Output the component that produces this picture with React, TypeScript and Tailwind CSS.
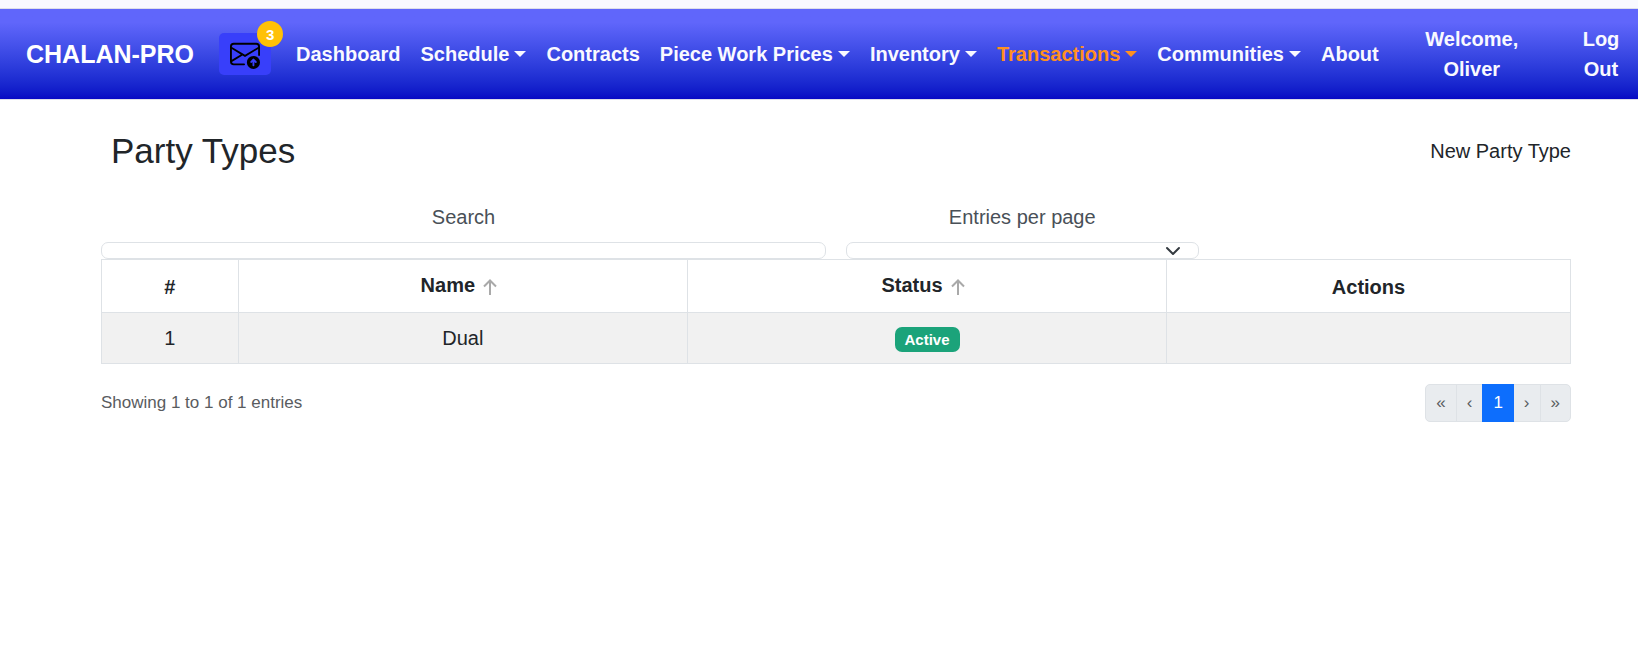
import React from "react";
import { BsEnvelopeArrowUp } from "react-icons/bs";

type NavItem = { label: string; menu?: boolean; active?: boolean };

const navItems: NavItem[] = [
  { label: "Dashboard" },
  { label: "Schedule", menu: true },
  { label: "Contracts" },
  { label: "Piece Work Prices", menu: true },
  { label: "Inventory", menu: true },
  { label: "Transactions", menu: true, active: true },
  { label: "Communities", menu: true },
  { label: "About" },
];

const rows = [{ id: 1, name: "Dual", status: "Active" }];

function NavLink({ label, menu, active }: NavItem) {
  return (
    <a
      href="#"
      className={`flex items-center whitespace-nowrap px-[10px] ${active ? "text-[#ff9020]" : "text-[#f9f9ff]"}`}
    >
      {label}
      {menu && (
        <span className="ml-[5px] border-x-6 border-t-6 border-x-transparent border-t-current" />
      )}
    </a>
  );
}

function SortArrow() {
  return (
    <svg viewBox="0 0 14 16" className="h-4 w-3.5" fill="none" stroke="#a9a9a9" strokeWidth="2" aria-hidden="true">
      <path d="M7 16V2M1 7.5L7 1.5L13 7.5" />
    </svg>
  );
}

function SortHeader({ label }: { label: string }) {
  return (
    <button type="button" className="inline-flex items-center gap-2 pr-2 pb-[3px] font-bold">
      {label}
      <span className="pt-1">
        <SortArrow />
      </span>
    </button>
  );
}

function PageButton({ label, name, current }: { label: string; name: string; current?: boolean }) {
  return (
    <li className="-ml-px first:ml-0">
      <button
        type="button"
        aria-label={name}
        className={`h-[38px] border px-[10px] text-[17px] leading-7 ${
          current
            ? "relative border-[#0d6efd] bg-[#0d6efd] text-white"
            : "border-[#dee2e6] bg-[#e9ecef] text-[#595c5f]"
        } ${name === "First" ? "rounded-l-[5px]" : ""} ${name === "Last" ? "rounded-r-[5px]" : ""}`}
      >
        {label}
      </button>
    </li>
  );
}

export default function App() {
  return (
    <div className="min-h-screen bg-white font-['Liberation_Sans',Arial,sans-serif] text-xl leading-[30px] text-[#212529]">
      <header className="bg-[#f9f9ff] pt-2">
        <nav className="flex items-center border-y border-[#dedeea] bg-linear-to-b from-[#6066fb] from-15% to-[#0808c4] pr-[18px] pl-[26px] font-bold text-[#f9f9ff]">
          <a href="#" className="text-[25px] text-white">
            CHALAN-PRO
          </a>
          <button
            type="button"
            aria-label="Messages"
            className="relative mr-[15px] ml-[25px] rounded-[5px] bg-[#383ffa] px-[11px] py-[6px] text-black"
          >
            <BsEnvelopeArrowUp className="size-[30px]" />
            <span className="absolute -top-3 -right-3 flex size-[26px] items-center justify-center rounded-full bg-[#ffc107] text-[15px] leading-none text-white">
              3
            </span>
          </button>
          {navItems.map((item) => (
            <NavLink key={item.label} {...item} />
          ))}
          <div className="flex flex-1 items-center justify-between pl-[35px] text-center">
            <span className="w-24 py-[15px]">Welcome, Oliver</span>
            <a href="#" className="w-[38px]">
              Log Out
            </a>
          </div>
        </nav>
      </header>

      <main className="mr-[67px] ml-[101px] pt-[30px]">
        <div className="flex items-center justify-between pl-[10px]">
          <h1 className="text-[35px] leading-[42px]">Party Types</h1>
          <a href="#">New Party Type</a>
        </div>

        <div className="grid grid-cols-4 gap-5 pt-[30px] text-center text-[#495057]">
          <div className="col-span-2 flex flex-col gap-[10px]">
            <label htmlFor="search">Search</label>
            <input
              id="search"
              type="text"
              className="h-[17px] w-full rounded-[7px] border border-[#dee2e6] bg-white px-4 text-xs"
            />
          </div>
          <div className="flex flex-col gap-[10px]">
            <label htmlFor="entries">Entries per page</label>
            <div className="relative flex">
              <select
                id="entries"
                defaultValue=""
                className="h-[17px] w-full appearance-none rounded-[7px] border border-[#dee2e6] bg-white px-4 text-xs"
              >
                <option value=""></option>
              </select>
              <svg
                viewBox="0 0 16 16"
                className="pointer-events-none absolute top-px right-[18px] size-4"
                fill="none"
                stroke="#343a40"
                strokeWidth="2"
                strokeLinecap="round"
                strokeLinejoin="round"
                aria-hidden="true"
              >
                <path d="m2 5 6 6 6-6" />
              </svg>
            </div>
          </div>
        </div>

        <table className="w-full table-fixed border-collapse text-center [&_td]:border [&_td]:border-[#dee2e6] [&_th]:border [&_th]:border-[#dee2e6]">
          <colgroup>
            <col className="w-[9.3%]" />
            <col className="w-[30.6%]" />
            <col className="w-[32.6%]" />
            <col className="w-[27.5%]" />
          </colgroup>
          <thead>
            <tr className="h-[53px]">
              <th className="pt-0.5">#</th>
              <th>
                <SortHeader label="Name" />
              </th>
              <th>
                <SortHeader label="Status" />
              </th>
              <th className="pt-0.5">Actions</th>
            </tr>
          </thead>
          <tbody>
            {rows.map((row) => (
              <tr key={row.id} className="h-[51px] bg-[#f1f1f1]">
                <td>{row.id}</td>
                <td>{row.name}</td>
                <td>
                  <span className="inline-block rounded-[7px] bg-[#1ba37a] px-[10px] py-[5px] align-middle text-[15px] leading-[15px] font-bold text-white">
                    {row.status}
                  </span>
                </td>
                <td></td>
              </tr>
            ))}
          </tbody>
        </table>

        <div className="flex items-center justify-between pt-5">
          <p className="text-[17px] text-[#595c5f]">Showing 1 to 1 of 1 entries</p>
          <ul className="flex">
            <PageButton name="First" label="«" />
            <PageButton name="Previous" label="‹" />
            <PageButton name="Page 1" label="1" current />
            <PageButton name="Next" label="›" />
            <PageButton name="Last" label="»" />
          </ul>
        </div>
      </main>
    </div>
  );
}
